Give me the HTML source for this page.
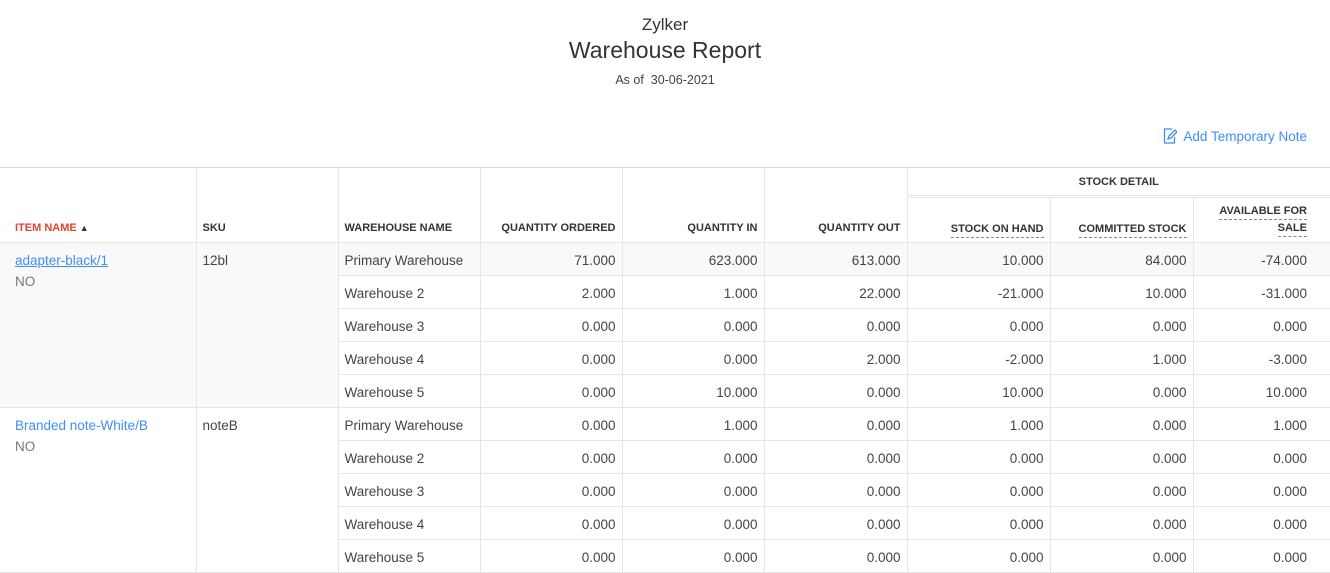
<!DOCTYPE html>
<html><head><meta charset="utf-8"><style>
*{margin:0;padding:0;box-sizing:border-box}
body{width:1330px;height:573px;overflow:hidden;background:#fff;font-family:"Liberation Sans",sans-serif;color:#333;position:relative}
.c{position:absolute;text-align:center;left:0;width:1330px}
table{position:absolute;left:0;top:167px;border-collapse:collapse;table-layout:fixed;width:1330px}
td,th{border:1px solid #e6e6e6;font-size:13.5px;padding:0 6px;white-space:nowrap}
th{font-size:11px;font-weight:bold;color:#333;vertical-align:bottom;padding-bottom:7px}
tr.d td{height:33px;text-align:right;padding-right:6px;padding-top:3px;color:#444}
tr.d td:last-child{padding-right:23px}
td.w{text-align:left!important;padding-left:6px;color:#444}
td.it{vertical-align:top;padding-top:10px!important;text-align:left!important;padding-left:15px}
td.sk{vertical-align:top;padding-top:10px!important;text-align:left!important}
.g td.it,.g td.sk,.g.f td{background:#f9f9f9}
a{color:#408dfb;text-decoration:none}
.dash{border-bottom:1px dashed #888;padding-bottom:2px}
tr:first-child th{border-top:1px solid #ddd}
td:first-child,th:first-child{border-left:none}
td:last-child,th:last-child{border-right:none}
</style></head><body>
<div class="c" style="top:15px;font-size:17px;color:#333">Zylker</div>
<div class="c" style="top:37px;font-size:23px;color:#333">Warehouse Report</div>
<div class="c" style="top:73px;font-size:12.5px;color:#444">As of &nbsp;30-06-2021</div>
<div style="position:absolute;right:23px;top:128px;font-size:13.5px;color:#408dfb">
<svg width="14" height="16" viewBox="0 0 14 16" style="vertical-align:-3px;margin-right:6px"><path d="M9 1H1.5v14h10V9" fill="none" stroke="#408dfb" stroke-width="1.3"/><path d="M5 11l1-3 6-6 2 2-6 6z" fill="none" stroke="#408dfb" stroke-width="1.3"/></svg>Add Temporary Note</div>
<table>
<colgroup><col style="width:196px"><col style="width:142px"><col style="width:142px"><col style="width:142px"><col style="width:142px"><col style="width:143px"><col style="width:143px"><col style="width:143px"><col style="width:137px"></colgroup>
<tr style="height:29px"><th rowspan="2" style="text-align:left;color:#e0442c;padding-left:15px;padding-bottom:8px">ITEM NAME <span style="color:#333;font-size:9px">&#9650;</span></th><th rowspan="2" style="text-align:left;padding-bottom:8px">SKU</th><th rowspan="2" style="text-align:left;padding-bottom:8px">WAREHOUSE NAME</th><th rowspan="2" style="text-align:right;padding-bottom:8px">QUANTITY ORDERED</th><th rowspan="2" style="text-align:right;padding-bottom:8px">QUANTITY IN</th><th rowspan="2" style="text-align:right;padding-bottom:8px">QUANTITY OUT</th><th colspan="3" style="text-align:center;vertical-align:middle;padding:0;border-bottom:3px double #e6e6e6">STOCK DETAIL</th></tr>
<tr style="height:46px"><th style="text-align:right;padding-right:6px"><span class="dash">STOCK ON HAND</span></th><th style="text-align:right;padding-right:6px"><span class="dash">COMMITTED STOCK</span></th><th style="text-align:right;padding-right:23px;line-height:17px;padding-bottom:5px"><span class="dash">AVAILABLE FOR</span><br><span class="dash">SALE</span></th></tr>
<tr class="d g f"><td class="it" rowspan="5"><a style="text-decoration:underline">adapter-black/1</a><div style="color:#777;margin-top:6px">NO</div></td><td class="sk" rowspan="5">12bl</td><td class="w">Primary Warehouse</td><td>71.000</td><td>623.000</td><td>613.000</td><td>10.000</td><td>84.000</td><td>-74.000</td></tr>
<tr class="d g"><td class="w">Warehouse 2</td><td>2.000</td><td>1.000</td><td>22.000</td><td>-21.000</td><td>10.000</td><td>-31.000</td></tr>
<tr class="d g"><td class="w">Warehouse 3</td><td>0.000</td><td>0.000</td><td>0.000</td><td>0.000</td><td>0.000</td><td>0.000</td></tr>
<tr class="d g"><td class="w">Warehouse 4</td><td>0.000</td><td>0.000</td><td>2.000</td><td>-2.000</td><td>1.000</td><td>-3.000</td></tr>
<tr class="d g"><td class="w">Warehouse 5</td><td>0.000</td><td>10.000</td><td>0.000</td><td>10.000</td><td>0.000</td><td>10.000</td></tr>
<tr class="d"><td class="it" rowspan="5"><a>Branded note-White/B</a><div style="color:#777;margin-top:6px">NO</div></td><td class="sk" rowspan="5">noteB</td><td class="w">Primary Warehouse</td><td>0.000</td><td>1.000</td><td>0.000</td><td>1.000</td><td>0.000</td><td>1.000</td></tr>
<tr class="d"><td class="w">Warehouse 2</td><td>0.000</td><td>0.000</td><td>0.000</td><td>0.000</td><td>0.000</td><td>0.000</td></tr>
<tr class="d"><td class="w">Warehouse 3</td><td>0.000</td><td>0.000</td><td>0.000</td><td>0.000</td><td>0.000</td><td>0.000</td></tr>
<tr class="d"><td class="w">Warehouse 4</td><td>0.000</td><td>0.000</td><td>0.000</td><td>0.000</td><td>0.000</td><td>0.000</td></tr>
<tr class="d"><td class="w">Warehouse 5</td><td>0.000</td><td>0.000</td><td>0.000</td><td>0.000</td><td>0.000</td><td>0.000</td></tr>
</table>
</body></html>
